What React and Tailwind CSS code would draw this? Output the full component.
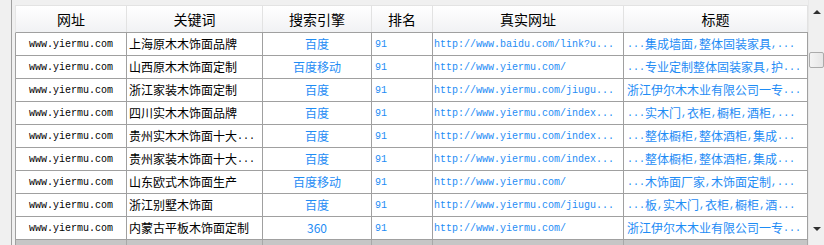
const rows = [
  ['上海原木木饰面品牌', '百度', 'http://www.baidu.com/link?u...', '...集成墙面,整体固装家具,...'],
  ['山西原木木饰面定制', '百度移动', 'http://www.yiermu.com/', '...专业定制整体固装家具,护...'],
  ['浙江家装木饰面定制', '百度', 'http://www.yiermu.com/jiugu...', '浙江伊尔木木业有限公司一专...'],
  ['四川实木木饰面品牌', '百度', 'http://www.yiermu.com/index...', '...实木门,衣柜,橱柜,酒柜,...'],
  ['贵州实木木饰面十大...', '百度', 'http://www.yiermu.com/index...', '...整体橱柜,整体酒柜,集成...'],
  ['贵州家装木饰面十大...', '百度', 'http://www.yiermu.com/index...', '...整体橱柜,整体酒柜,集成...'],
  ['山东欧式木饰面生产', '百度移动', 'http://www.yiermu.com/', '...木饰面厂家,木饰面定制,...'],
  ['浙江别墅木饰面', '百度', 'http://www.yiermu.com/jiugu...', '...板,实木门,衣柜,橱柜,酒...'],
  ['内蒙古平板木饰面定制', '360', 'http://www.yiermu.com/', '浙江伊尔木木业有限公司一专...'],
];

const headers = ['网址', '关键词', '搜索引擎', '排名', '真实网址', '标题'];
const cols = 'grid-cols-[111px_136px_109px_61px_191px_184px]';
const cjk = "font-['Noto_Sans_CJK_SC',sans-serif]";
const mono = "font-['Liberation_Mono',monospace]";

// dots and commas are drawn half-width, like the old bitmap font
function Txt({ text }) {
  return text.split(/(\.\.\.|,)/).map((part, i) =>
    part === '...' || part === ',' ? (
      <span key={i} className={`${mono} text-[10px]`}>{part}</span>
    ) : (
      <span key={i}>{part}</span>
    )
  );
}

export default function App() {
  return (
    <div className="w-[824px] h-[245px] bg-[#f0f0f0] flex overflow-hidden">
      <div className="w-[11px] shrink-0" />
      <div className="w-[4px] shrink-0 border-l border-[#a0a0a0]" />
      <div className="w-[793px] shrink-0 flex flex-col">
        <div className="h-[5px] shrink-0" />
        <div className={`grid ${cols} h-[28px] shrink-0 border-t border-[#e3e3e3] border-b border-b-[#a0a0a0] border-l border-l-[#e6e6e6] bg-gradient-to-b from-white to-[#f1f2f4] ${cjk}`}>
          {headers.map((h) => (
            <div key={h} className="flex items-center justify-center border-r border-[#e2e2e2] text-[14px] text-black leading-none">
              {h}
            </div>
          ))}
        </div>
        {rows.map((r, i) => (
          <div key={i} className={`grid ${cols} h-[23px] shrink-0 bg-white border-b border-l border-[#a0a0a0] text-[#1e8cf5]`}>
            <div className={`flex items-center justify-center border-r border-[#a0a0a0] text-[10px] text-black ${mono}`}>
              www.yiermu.com
            </div>
            <div className={`flex items-center pl-[2px] border-r border-[#a0a0a0] text-[12px] text-black whitespace-nowrap overflow-hidden ${cjk}`}>
              <Txt text={r[0]} />
            </div>
            <div className={`flex items-center justify-center border-r border-[#a0a0a0] text-[12px] ${cjk}`}>
              {r[1]}
            </div>
            <div className={`flex items-center pl-[3px] border-r border-[#a0a0a0] text-[10px] ${mono}`}>
              91
            </div>
            <div className={`flex items-center pl-[1px] border-r border-[#a0a0a0] text-[10px] whitespace-nowrap overflow-hidden ${mono}`}>
              {r[2]}
            </div>
            <div className={`flex items-center pl-[3px] border-r border-[#a0a0a0] text-[12px] whitespace-nowrap overflow-hidden ${cjk}`}>
              <Txt text={r[3]} />
            </div>
          </div>
        ))}
        <div className={`grid ${cols} flex-1 bg-[#c6c6c6] border-l border-[#a0a0a0]`}>
          {headers.map((h) => (
            <div key={h} className="border-r border-[#a8a8a8]" />
          ))}
        </div>
      </div>
      <div className="w-[16px] shrink-0 flex flex-col items-center bg-[#f0f0f0] border-l border-[#e8e8e8]">
        <div className="h-[10px]" />
        <div className="w-0 h-0 border-l-[4px] border-r-[4px] border-b-[4px] border-l-transparent border-r-transparent border-b-[#303030]" />
        <div className="h-[38px]" />
        <div className="w-[15px] h-[16px] rounded-[2px] border border-[#ababab] bg-gradient-to-r from-[#f4f4f4] to-[#e6e6e6]" />
        <div className="flex-1" />
        <div className="w-0 h-0 border-l-[4px] border-r-[4px] border-t-[4px] border-l-transparent border-r-transparent border-t-[#303030]" />
        <div className="h-[14px]" />
      </div>
    </div>
  );
}
